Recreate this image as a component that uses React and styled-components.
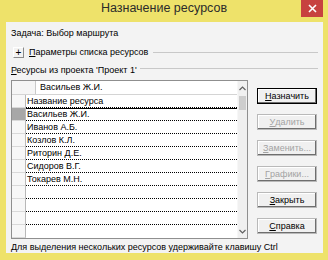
import styled, { createGlobalStyle } from "styled-components";

const GlobalStyle = createGlobalStyle`
  body {
    margin: 0;
  }
`;

const resources = [
  { name: "Название ресурса" },
  { name: "Васильев Ж.И.", selected: true },
  { name: "Иванов А.Б." },
  { name: "Козлов К.Л." },
  { name: "Риторин Д.Е." },
  { name: "Сидоров В.Г." },
  { name: "Токарев М.Н." },
  { name: "" },
  { name: "" },
  { name: "" },
  { name: "", last: true },
];

const actions = [
  { hot: "Н", rest: "азначить", primary: true },
  { hot: "У", rest: "далить", disabled: true },
  { hot: "З", rest: "аменить...", disabled: true },
  { hot: "Г", rest: "рафики...", disabled: true },
  { hot: "З", rest: "акрыть" },
  { hot: "С", rest: "правка" },
];

const App = () => {
  return (
    <>
      <GlobalStyle />
      <Window>
        <TitleBar>
          <span />
          <Title>Назначение ресурсов</Title>
          <CloseButton>
            <svg width="9" height="9" viewBox="0 0 9 9">
              <path d="M1 1 L8 8 M8 1 L1 8" stroke="#fff" strokeWidth="1.6" />
            </svg>
          </CloseButton>
        </TitleBar>

        <Client>
          <TaskLine>Задача: Выбор маршрута</TaskLine>

          <GroupRow>
            <ExpandBox>+</ExpandBox>
            <span><u>П</u>араметры списка ресурсов</span>
          </GroupRow>

          <SectionRow>
            <span><u>Р</u>есурсы из проекта 'Проект 1'</span>
          </SectionRow>

          <Body>
            <Sheet>
              <SheetMain>
                <HeaderRow>
                  <HeaderCorner />
                  <EditField>Васильев Ж.И.</EditField>
                </HeaderRow>
                {resources.map(({ name, selected, last }, idx) => (
                  <Row key={`${idx}-row`}>
                    <RowHead $selected={selected} />
                    <Cell $selected={selected} $last={last}>{name}</Cell>
                  </Row>
                ))}
              </SheetMain>
              <ScrollBar>
                <Arrow>
                  <svg width="7" height="5" viewBox="0 0 7 5">
                    <path d="M0.5 4 L3.5 1 L6.5 4" fill="none" stroke="#606060" strokeWidth="1.2" />
                  </svg>
                </Arrow>
                <Thumb />
                <Track />
                <Arrow>
                  <svg width="7" height="5" viewBox="0 0 7 5">
                    <path d="M0.5 1 L3.5 4 L6.5 1" fill="none" stroke="#606060" strokeWidth="1.2" />
                  </svg>
                </Arrow>
              </ScrollBar>
            </Sheet>

            <ButtonColumn>
              {actions.map(({ hot, rest, primary, disabled }, idx) => (
                <DialogButton key={`${idx}-btn`} $primary={primary} $disabled={disabled}>
                  <u>{hot}</u>{rest}
                </DialogButton>
              ))}
            </ButtonColumn>
          </Body>

          <Footer>Для выделения нескольких ресурсов удерживайте клавишу Ctrl</Footer>
        </Client>
      </Window>
    </>
  );
};

const Window = styled.div`
  width: 328px;
  height: 260px;
  background: #eee26a;
  display: flex;
  flex-direction: column;
  font-family: "Liberation Sans", Arial, sans-serif;
  font-size: 9px;
  color: #000;
  overflow: hidden;
`;

const TitleBar = styled.div`
  height: 22px;
  flex-shrink: 0;
  display: grid;
  grid-template-columns: 1fr auto 1fr;
  align-items: start;
`;

const Title = styled.div`
  font-size: 12.5px;
  line-height: 17px;
  color: #2b2b2b;
`;

const CloseButton = styled.div`
  justify-self: end;
  width: 22px;
  height: 17px;
  margin-right: 5px;
  background: #c7423f;
  display: flex;
  align-items: center;
  justify-content: center;
`;

const Client = styled.div`
  flex: 1;
  margin: 0 5px 7px 6px;
  background: #f3f3f3;
  padding: 0 5px;
  display: flex;
  flex-direction: column;
`;

const TaskLine = styled.div`
  margin-top: 5px;
  line-height: 12px;
`;

const GroupRow = styled.div`
  margin-top: 8px;
  height: 11px;
  display: flex;
  align-items: center;
  gap: 5px;
  line-height: 11px;

  &::after {
    content: "";
    flex: 1;
    height: 1px;
    background: #c8c8c8;
    margin-left: 0;
  }
`;

const ExpandBox = styled.div`
  width: 9px;
  height: 9px;
  margin-left: 2px;
  border: 1px solid;
  border-color: #fff #8a8a8a #8a8a8a #fff;
  font-size: 10px;
  line-height: 9px;
  text-align: center;
`;

const SectionRow = styled.div`
  margin-top: 6px;
  height: 12px;
  display: flex;
  align-items: center;
  line-height: 12px;

  &::after {
    content: "";
    flex: 1;
    height: 1px;
    background: #c8c8c8;
    margin-left: 3px;
    margin-top: -3px;
  }
`;

const Body = styled.div`
  margin-top: 4px;
  display: flex;
  gap: 9px;
`;

const Sheet = styled.div`
  width: 235px;
  border: 1px solid #8f8f8f;
  background: #fff;
  display: grid;
  grid-template-columns: 1fr 10px;
`;

const SheetMain = styled.div`
  display: flex;
  flex-direction: column;
`;

const HeaderRow = styled.div`
  height: 13px;
  flex-shrink: 0;
  display: flex;
  border-bottom: 1px solid #d4d4d4;
`;

const HeaderCorner = styled.div`
  width: 23px;
  background: #f5f5f5;
  border-right: 1px solid #c9c9c9;
`;

const EditField = styled.div`
  flex: 1;
  padding-left: 4px;
  line-height: 13px;
`;

const Row = styled.div`
  height: 13px;
  flex-shrink: 0;
  display: flex;
`;

const RowHead = styled.div`
  width: 13px;
  border-right: 1px solid #b8b8b8;
  border-bottom: 1px solid #d9d9d9;
  background: ${({ $selected }) => ($selected ? "#a7a7a7" : "#f7f7f7")};
`;

const Cell = styled.div`
  flex: 1;
  padding-left: 1px;
  line-height: 12px;
  white-space: nowrap;
  border-bottom: ${({ $last }) => ($last ? "none" : "1px dotted #000")};
  box-shadow: ${({ $selected }) => ($selected ? "inset 0 1px 0 #000" : "none")};
`;

const ScrollBar = styled.div`
  display: flex;
  flex-direction: column;
  background: #f0f0f0;
  border-left: 1px solid #f7f7f7;
`;

const Arrow = styled.div`
  height: 14px;
  display: flex;
  align-items: center;
  justify-content: center;
`;

const Thumb = styled.div`
  height: 14px;
  margin: 1px 1px 0;
  background: #cdcdcd;
`;

const Track = styled.div`
  flex: 1;
`;

const ButtonColumn = styled.div`
  padding-top: 8px;
  display: flex;
  flex-direction: column;
  gap: 10px;
`;

const DialogButton = styled.div`
  box-sizing: border-box;
  width: 60px;
  height: 16px;
  display: flex;
  align-items: center;
  justify-content: center;
  background: #f0f0f0;
  color: ${({ $disabled }) => ($disabled ? "#a3a3a3" : "#000")};
  border: 1px solid ${({ $primary }) => ($primary ? "#000" : "#b9b9b9")};
  box-shadow: inset -1px -1px 0 #6e6e6e, inset 1px 1px 0 #fff;
`;

const Footer = styled.div`
  margin-top: 2px;
  line-height: 12px;
  white-space: nowrap;
`;

export default App;
